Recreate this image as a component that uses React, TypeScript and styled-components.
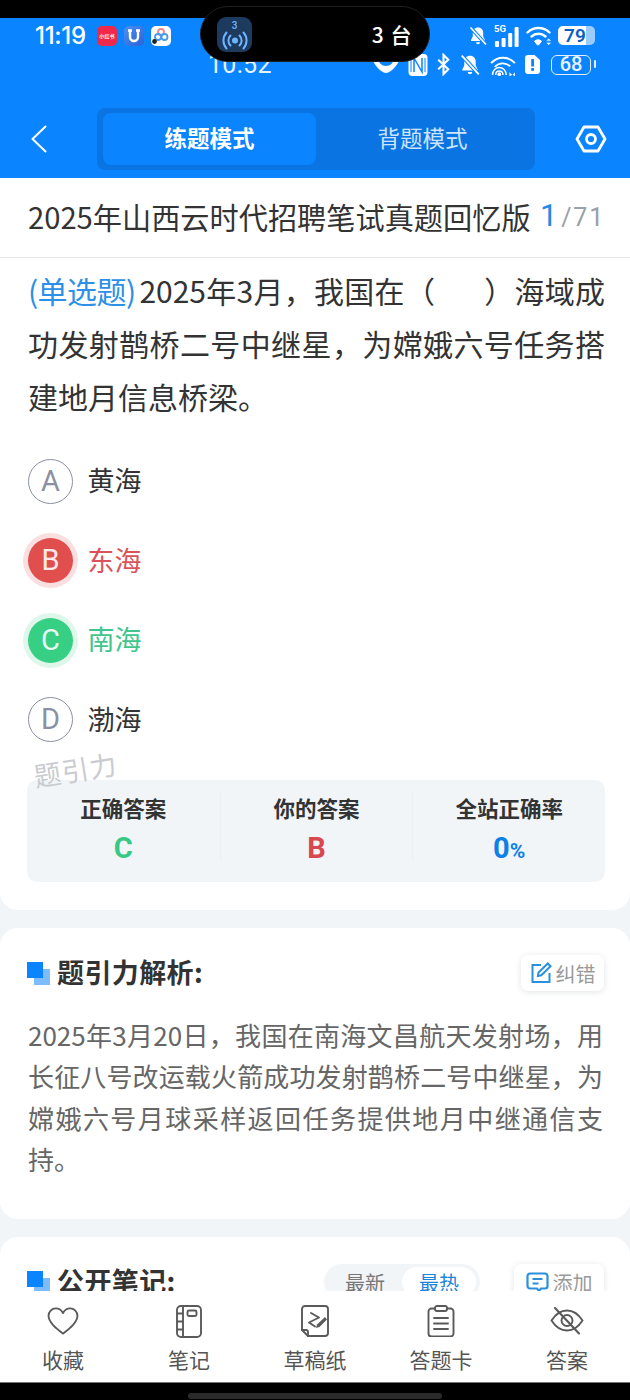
import React from "react";
import styled, { createGlobalStyle } from "styled-components";

const Global = createGlobalStyle`
  html, body { margin: 0; padding: 0; background: #f2f5f8; }
  body { font-family: "Noto Sans CJK SC", "Noto Sans", sans-serif; }
  * { box-sizing: border-box; }
`;

const Page = styled.div`
  width: 630px; height: 1400px; display: flex; flex-direction: column; position: relative; overflow: hidden; background: #f2f5f8;
`;
const TopBlack = styled.div`height: 18px; background: #000; flex: none;`;
const Header = styled.header`height: 160px; flex: none; background: #0a84ff; display: flex; flex-direction: column; color: #fff;`;
const StatusOne = styled.div`height: 31px; flex: none; display: flex; align-items: center; padding: 0 35px; margin-top: 2px;`;
const StatusTwo = styled.div`height: 27px; flex: none; display: flex; align-items: center; padding: 0 34px 0 208px;`;
const Clock = styled.span`font: 500 24px/1 "Inter", "Roboto", sans-serif; letter-spacing: -.3px;`;
const ClockTwo = styled.span`font: 400 25px/1 "Roboto", sans-serif; letter-spacing: .3px; opacity: .9;`;
const AppIcon = styled.div<{ $bg: string }>`width: 20px; height: 20px; border-radius: 5px; background: ${p => p.$bg}; display: flex; align-items: center; justify-content: center; margin-left: 7px; color: #fff; flex: none; &:first-of-type { margin-left: 11px; }`;
const TinyText = styled.span`font-size: 6px; font-weight: 700; white-space: nowrap; transform: scale(.85);`;
const Spacer = styled.div`flex: 1;`;
const StatusIcons = styled.div<{ $gap: number }>`display: flex; align-items: center; gap: ${p => p.$gap}px;`;
const BatteryFull = styled.div`width: 37px; height: 19px; border-radius: 5px; display: flex; background: linear-gradient(90deg, #fff 0 76%, #9ccbff 76% 100%); color: #0b5fc0; font: 600 19px/19px "Roboto", sans-serif; padding-left: 6px; position: relative; letter-spacing: .2px;`;
const BatteryOutline = styled.div`width: 40px; height: 20px; border: 1.5px solid #e3f0ff; border-radius: 6px; color: #e9f3ff; font: 500 20px/17px "Roboto", sans-serif; text-align: center; margin: 0 5px 0 3px; position: relative; &::after { content: ""; position: absolute; right: -6px; top: 4px; width: 2px; height: 8px; background: #e3f0ff; border-radius: 1px; }`;
const Island = styled.div`position: absolute; left: 200px; top: 6px; width: 230px; height: 56px; border-radius: 28px; background: #000; border: 1px solid #1f1f1f; display: flex; align-items: center; padding: 0 17px 0 16px; color: #fff;`;
const IslandIcon = styled.div`width: 35px; height: 35px; border-radius: 9px; background: #1d3a5f; display: flex; flex-direction: column; align-items: center; color: #6fb4ff;`;
const IslandNum = styled.span`font: 500 10px/10px "Roboto", sans-serif; margin-top: 4px;`;
const IslandText = styled.span`font: 500 21px/1 "Noto Sans CJK SC", sans-serif; margin-left: auto; word-spacing: 1px; letter-spacing: .5px;`;
const NavRow = styled.div`display: flex; flex: none; align-items: center; margin-top: 30px; padding: 0 23px 0 31px;`;
const Tabs = styled.div`width: 438px; height: 62px; margin-left: 50px; border-radius: 8px; background: #0a74e2; display: flex; padding: 5px 6px; `;
const Tab = styled.div<{ $active?: boolean }>`width: 213px; border-radius: 8px; display: flex; align-items: center; justify-content: center; padding-bottom: 4px; font-size: 22.5px; font-weight: ${p => (p.$active ? 700 : 400)}; color: ${p => (p.$active ? "#fff" : "#cde4ff")}; background: ${p => (p.$active ? "#0a84ff" : "transparent")}; margin-right: 1px; &:last-child { flex: 1; }`;
const RightBtn = styled.div`margin-left: auto; display: flex;`;
const Scroll = styled.main`flex: 1; min-height: 0; overflow: hidden; display: flex; flex-direction: column; gap: 18px;`;
const QuestionCard = styled.section`background: #fff; border-radius: 0 0 18px 18px; flex: none; height: 732px;`;
const TitleRow = styled.div`height: 80px; display: flex; align-items: center; padding: 0 25px 4px 28px; border-bottom: 1px solid #e6e8ec; margin-bottom: 6px;`;
const TitleText = styled.h1`margin: 0; font-size: 29.2px; font-weight: 400; color: #333; white-space: nowrap;`;
const Counter = styled.div`margin-left: auto; display: flex; align-items: baseline; color: #9aa0a8; font: 400 25px/1 "Roboto", sans-serif; letter-spacing: 1.8px;`;
const CounterNow = styled.span`font-size: 31px; color: #1f8ae8; margin-right: 2px;`;
const Question = styled.p`margin: 0; padding: 0 25px 0 28px; font-size: 30px; line-height: 53px; color: #333; text-align: justify;`;
const QType = styled.span`color: #2c90e6; letter-spacing: -.8px; margin-right: 4px;`;
const Options = styled.div`display: flex; flex-direction: column; margin-top: 35.5px; padding: 0 28px; gap: 34.5px;`;
const Option = styled.div`display: flex; align-items: center; gap: 14.5px; height: 45px;`;
const Circle = styled.div<{ $state?: "wrong" | "right" }>`
  width: 45px; height: 45px; border-radius: 50%; display: flex; align-items: center; justify-content: center; font: 400 29px/1 "Roboto", sans-serif;
  ${p => p.$state === "wrong" ? "background:#e04e4e;color:#fde9e9;box-shadow:0 0 0 5px #fadfe0;" : p.$state === "right" ? "background:#36cf83;color:#e9fbf2;box-shadow:0 0 0 5px #def7ea;" : "border:1.5px solid #8b90a3;color:#8b90a3;"}
`;
const OptionLabel = styled.span<{ $state?: "wrong" | "right" }>`font-size: 27px; padding-bottom: 3px; color: ${p => (p.$state === "wrong" ? "#d9545a" : p.$state === "right" ? "#41c58c" : "#333")};`;
const StatsWrap = styled.div`position: relative; padding: 0 25px 0 27px; margin-top: 38px;`;
const Watermark = styled.div`position: absolute; left: 37px; top: -24px; font-size: 27px; color: #c9cbcf; transform: rotate(-9deg); letter-spacing: 1px; transform-origin: left bottom;`;
const Stats = styled.div`height: 102px; background: #f2f5f8; border-radius: 10px; display: grid; grid-template-columns: repeat(3, 1fr); padding: 13px 0 0;`;
const Stat = styled.div`display: flex; flex-direction: column; align-items: center; height: 68px; border-left: 1px solid #edf0f3; &:first-child { border-left: none; }`;
const StatLabel = styled.div`font-size: 21.5px; line-height: 30px; font-weight: 700; color: #333;`;
const StatValue = styled.div<{ $color: string }>`font: 700 29px/36px "Roboto", sans-serif; color: ${p => p.$color}; margin-top: 7px;`;
const StatUnit = styled.span`font-size: 21px;`;
const Card = styled.section<{ $h: number }>`background: #fff; border-radius: 18px; height: ${p => p.$h}px; flex: none; padding: 27px 26px 0 27px;`;
const SectionHead = styled.div`display: flex; align-items: center; height: 36px;`;
const Mark = styled.div`width: 23px; height: 23px; position: relative; margin-right: 7px; flex: none;
  &::before { content: ""; position: absolute; right: 0; bottom: 0; width: 16px; height: 16px; background: #7dbdff; }
  &::after { content: ""; position: absolute; left: 0; top: 0; width: 16px; height: 16px; background: #0a84ff; }`;
const SectionTitle = styled.h2`margin: 0 0 2px; font-size: 27px; line-height: 36px; font-weight: 700; letter-spacing: .4px; color: #333; white-space: nowrap;`;
const Chip = styled.div<{ $w: number; $ml?: number }>`margin-left: ${p => (p.$ml ? `${p.$ml}px` : "auto")}; width: ${p => p.$w}px; height: 36px; border-radius: 7px; background: #fff; box-shadow: 0 1px 6px rgba(40,60,90,.14); display: flex; align-items: center; justify-content: center; gap: 4px; font-size: 20px; color: #9a9a9a;`;
const Analysis = styled.p`margin: 23px 1px 0 1px; font-size: 26px; line-height: 41.3px; color: #666; text-align: justify;`;
const Seg = styled.div`margin-left: auto; width: 156px; height: 36px; border-radius: 18px; background: #f2f5f8; display: flex; padding: 3px 4px; align-items: stretch; font-size: 20px;`;
const SegItem = styled.div<{ $active?: boolean }>`flex: 1; border-radius: 16px; display: flex; align-items: center; justify-content: center; color: ${p => (p.$active ? "#1f85d9" : "#777")}; background: ${p => (p.$active ? "#fff" : "transparent")};`;
const BottomNav = styled.nav`height: 91px; flex: none; background: #fff; display: grid; grid-template-columns: repeat(5, 1fr); `;
const NavItem = styled.div`display: flex; flex-direction: column; align-items: center; color: #555; font-size: 21px;`;
const NavIcon = styled.div`height: 36px; margin-top: 12px; display: flex; align-items: center; justify-content: center;`;
const NavLabel = styled.span`line-height: 30px; margin-top: 5px;`;
const BottomBlack = styled.div`height: 18px; flex: none; background: #000; display: flex; justify-content: center; align-items: flex-end; padding-bottom: 1px; border-top: 1px solid #777;`;
const HomeBar = styled.div`width: 254px; height: 6px; border-radius: 3px; background: #2b2b2b;`;

const Bell = ({ size = 20 }: { size?: number }) => (
  <svg width={size} height={size} viewBox="0 0 20 20" fill="#fff">
    <path d="M10 1.5c-3.2 0-5.2 2.4-5.2 5.4v3.6L3 14v1h14v-1l-1.8-3.5V6.9c0-3-2-5.4-5.2-5.4z" />
    <path d="M8 16.3h4a2 2 0 0 1-4 0z" />
    <path d="M2.5 1.5l15.5 17" stroke="#0a84ff" strokeWidth="3.6" />
    <path d="M2.5 1.5l15.5 17" stroke="#fff" strokeWidth="1.7" />
  </svg>
);
const Signal = () => (
  <svg width="26" height="24" viewBox="0 0 26 24" fill="#fff">
    <text x="0" y="8" fontSize="9.5" fontWeight="700" fontFamily="Roboto, sans-serif">5G</text>
    <rect x="1" y="17" width="4" height="6" rx="1" />
    <rect x="7.6" y="14" width="4" height="9" rx="1" />
    <rect x="14.2" y="9" width="4" height="14" rx="1" />
    <rect x="20.6" y="3" width="4" height="20" rx="1" />
  </svg>
);
const Wifi = () => (
  <svg width="26" height="22" viewBox="0 0 26 22" fill="none" stroke="#fff" strokeWidth="2.4" strokeLinecap="round">
    <path d="M1.5 7.5C7.5 1.5 17.5 1.5 23.5 7.5" />
    <path d="M5.5 11.5c4-3.7 10-3.7 14 0" />
    <path d="M11 19.5l-2.5-3.4c2.4-1.7 4.7-1.7 7 0L13 19.5z" fill="#fff" strokeWidth="1" />
    <path d="M21 15.5l1.7-1.8 1.7 1.8zM21 18l1.7 1.8 1.7-1.8z" fill="#fff" strokeWidth=".4" />
  </svg>
);
const Nfc = () => (
  <svg width="20" height="24" viewBox="0 0 20 24" fill="none">
    <rect x="0.5" y="1" width="19" height="22" rx="4" fill="#fff" />
    <path d="M6 19V5l8 14V5" stroke="#0a84ff" strokeWidth="1.5" />
    <path d="M3 5v14M17 5v14" stroke="#0a84ff" strokeWidth="1" />
  </svg>
);
const Bt = () => (
  <svg width="15" height="23" viewBox="0 0 15 24" fill="none" stroke="#fff" strokeWidth="2.2">
    <path d="M2 7l10.5 10-5 5V2l5 5L2 17" />
  </svg>
);
const WifiRadar = () => (
  <svg width="28" height="22" viewBox="0 0 28 24" fill="none" stroke="#fff" strokeWidth="1.8">
    <path d="M1 10C8 2 20 2 27 10" strokeWidth="2.2" />
    <path d="M5 14c5-5 12-5 17-.5" />
    <path d="M2.5 23c0-11 15-11 15 0M6 23c0-6 8-6 8 0" strokeWidth="1.6" />
    <circle cx="10" cy="22" r="2" fill="#fff" stroke="none" />
    <path d="M21 20l3 2.5-3 2zM27 20l-2.5 2.5 2.5 2z" fill="#fff" stroke="none" />
  </svg>
);
const Sim = () => (
  <svg width="15" height="19" viewBox="0 0 15 19">
    <path d="M3 0h6.5L15 5v11a3 3 0 0 1-3 3H3a3 3 0 0 1-3-3V3a3 3 0 0 1 3-3z" fill="#fff" />
    <rect x="6.2" y="4" width="2.8" height="7.5" fill="#0a84ff" />
    <rect x="6.2" y="13" width="2.8" height="2.8" fill="#0a84ff" />
  </svg>
);
const EyeBlob = () => (
  <svg width="28" height="24" viewBox="0 0 28 24">
    <path d="M1 8c4 8 10 12 13 12s9-4 13-12z" fill="#fff" />
    <circle cx="14" cy="5" r="8" fill="#0a84ff" />
  </svg>
);
const Broadcast = () => (
  <svg width="26" height="19" viewBox="0 0 26 19" fill="none" stroke="currentColor" strokeWidth="2" strokeLinecap="round">
    <circle cx="13" cy="9.5" r="3" fill="currentColor" stroke="none" />
    <path d="M8.5 4.5a7 7 0 0 0 0 10M17.5 4.5a7 7 0 0 1 0 10M4.5 1.5a12 12 0 0 0 0 16M21.5 1.5a12 12 0 0 1 0 16" />
  </svg>
);
const Pencil = () => (
  <svg width="22" height="22" viewBox="0 0 22 22" fill="none" stroke="#2a90dc" strokeWidth="2">
    <path d="M11 3H2.5v17h17v-9" />
    <path d="M8.5 10.5L17.8 1.5l2.7 2.7L11.3 13.3l-3.4.6z" />
  </svg>
);
const Comment = () => (
  <svg width="23" height="21" viewBox="0 0 23 21" fill="none" stroke="#2a90dc" strokeWidth="2.2">
    <path d="M4 1.5h15a2.5 2.5 0 0 1 2.5 2.5v10a2.5 2.5 0 0 1-2.5 2.5h-4L13 19l-2-2.5H4A2.5 2.5 0 0 1 1.5 14V4A2.5 2.5 0 0 1 4 1.5z" />
    <path d="M6.5 7h10M6.5 11.5h6" />
  </svg>
);

const Heart = () => (
  <svg width="32" height="28" viewBox="0 0 34 30" fill="none" stroke="#5a5a5a" strokeWidth="2" strokeLinejoin="round">
    <path d="M17 28.5C10 23 1.5 16.5 1.5 9.5 1.5 5 5 1.5 9.3 1.5c3.2 0 6 1.8 7.7 5 1.7-3.2 4.5-5 7.7-5 4.3 0 7.8 3.5 7.8 8 0 7-8.5 13.5-15.5 19z" />
  </svg>
);
const Notebook = () => (
  <svg width="26" height="33" viewBox="0 0 26 33" fill="none" stroke="#5a5a5a" strokeWidth="1.9">
    <rect x="1" y="1" width="24" height="31" rx="4" />
    <path d="M7 1v31M1 8.5h6M1 16.5h6M1 24.5h6" />
    <rect x="11.5" y="5.5" width="9" height="5.5" rx="1.5" />
  </svg>
);
const Draft = () => (
  <svg width="28" height="32" viewBox="0 0 28 32" fill="none" stroke="#5a5a5a" strokeWidth="1.9" strokeLinejoin="round" strokeLinecap="round">
    <path d="M4 1h20a3 3 0 0 1 3 3v24a3 3 0 0 1-3 3H7l-6-6V4a3 3 0 0 1 3-3z" />
    <path d="M1 25h4a2 2 0 0 1 2 2v4" />
    <path d="M10 8l8 4.500-10 5 6 4" />
    <path d="M15 23l1-3.500 8-7.500 2 2.500-7.500 7.500z" fill="#5a5a5a" stroke="none" />
  </svg>
);
const Clipboard = () => (
  <svg width="28" height="32" viewBox="0 0 28 32" fill="none" stroke="#5a5a5a" strokeWidth="1.9" strokeLinecap="round">
    <path d="M8 3.5H4.500a3 3 0 0 0-3 3v22a3 3 0 0 0 3 3h19a3 3 0 0 0 3-3v-22a3 3 0 0 0-3-3H20" />
    <rect x="8" y="1" width="12" height="5" rx="2" />
    <path d="M7 13h14M7 18.5h14M7 24h14" />
  </svg>
);
const EyeOff = () => (
  <svg width="34" height="28" viewBox="0 0 34 28" fill="none" stroke="#5a5a5a" strokeWidth="1.9" strokeLinecap="round">
    <path d="M1.5 13.5C6 6.5 11 3.500 17 3.500s11 3 15.500 10C28 20.500 23 23.500 17 23.500S6 20.500 1.500 13.500z" />
    <circle cx="17" cy="13.5" r="5.5" />
    <path d="M5 1l24 25.5" strokeWidth="2.1" />
  </svg>
);
const Back = () => (
  <svg width="16" height="28" viewBox="0 0 16 28" fill="none" stroke="#fff" strokeWidth="2" strokeLinecap="round" strokeLinejoin="round">
    <path d="M14.5 1.5L1.5 14l13 12.5" />
  </svg>
);
const Hex = () => (
  <svg width="32" height="28" viewBox="0 0 32 28" fill="none" stroke="#fff" strokeWidth="2.8" strokeLinejoin="round">
    <path d="M9 2h14l7 12-7 12H9L2 14z" />
    <circle cx="16" cy="14" r="4.5" />
  </svg>
);

const options = [
  { k: "A", t: "黄海" },
  { k: "B", t: "东海", s: "wrong" as const },
  { k: "C", t: "南海", s: "right" as const },
  { k: "D", t: "渤海" },
];
const nav = [
  { l: "收藏", i: <Heart /> },
  { l: "笔记", i: <Notebook /> },
  { l: "草稿纸", i: <Draft /> },
  { l: "答题卡", i: <Clipboard /> },
  { l: "答案", i: <EyeOff /> },
];

export default function App() {
  return (
    <Page>
      <Global />
      <TopBlack />
      <Header>
        <StatusOne>
          <Clock>11:19</Clock>
          <AppIcon $bg="#f0284a"><TinyText>小红书</TinyText></AppIcon>
          <AppIcon $bg="linear-gradient(135deg,#4f8ff0,#2a62d8)">
            <svg width="14" height="15" viewBox="0 0 14 15" fill="none" stroke="#fff" strokeWidth="2.4"><path d="M3 2v7a4 4 0 0 0 8 0V2M1 2.5h4M9 2.5h4" /></svg>
          </AppIcon>
          <AppIcon $bg="#fff">
            <svg width="19" height="19" viewBox="0 0 19 19" fill="none" strokeWidth="1.8"><circle cx="10" cy="6" r="3" stroke="#e88" /><circle cx="13.5" cy="11" r="3" stroke="#4a9be8" /><circle cx="7" cy="11" r="3" stroke="#4a9be8" /><circle cx="3.5" cy="15.5" r="1.5" fill="#222" stroke="#222" /></svg>
          </AppIcon>
          <Spacer />
          <StatusIcons $gap={6}>
            <Bell />
            <Signal />
            <Wifi />
            <BatteryFull>79</BatteryFull>
          </StatusIcons>
        </StatusOne>
        <StatusTwo>
          <ClockTwo>10:52</ClockTwo>
          <Spacer />
          <StatusIcons $gap={8}>
            <EyeBlob />
            <Nfc />
            <Bt />
            <Bell size={22} />
            <WifiRadar />
            <Sim />
            <BatteryOutline>68</BatteryOutline>
          </StatusIcons>
        </StatusTwo>
        <NavRow>
          <Back />
          <Tabs>
            <Tab $active>练题模式</Tab>
            <Tab>背题模式</Tab>
          </Tabs>
          <RightBtn><Hex /></RightBtn>
        </NavRow>
      </Header>
      <Island>
        <IslandIcon>
          <IslandNum>3</IslandNum>
          <Broadcast />
        </IslandIcon>
        <IslandText>3 台</IslandText>
      </Island>
      <Scroll>
        <QuestionCard>
          <TitleRow>
            <TitleText>2025年山西云时代招聘笔试真题回忆版</TitleText>
            <Counter><CounterNow>1</CounterNow>/71</Counter>
          </TitleRow>
          <Question>
            <QType>(单选题)</QType>2025年3月，我国在（&nbsp;&nbsp;&nbsp;&nbsp;&nbsp;&nbsp;&nbsp;）海域成功发射鹊桥二号中继星，为嫦娥六号任务搭建地月信息桥梁。
          </Question>
          <Options>
            {options.map(o => (
              <Option key={o.k}>
                <Circle $state={o.s}>{o.k}</Circle>
                <OptionLabel $state={o.s}>{o.t}</OptionLabel>
              </Option>
            ))}
          </Options>
          <StatsWrap>
            <Watermark>题引力</Watermark>
            <Stats>
              <Stat><StatLabel>正确答案</StatLabel><StatValue $color="#36c985">C</StatValue></Stat>
              <Stat><StatLabel>你的答案</StatLabel><StatValue $color="#d9474f">B</StatValue></Stat>
              <Stat><StatLabel>全站正确率</StatLabel><StatValue $color="#0d7fe8">0<StatUnit>%</StatUnit></StatValue></Stat>
            </Stats>
          </StatsWrap>
        </QuestionCard>
        <Card $h={291}>
          <SectionHead>
            <Mark />
            <SectionTitle>题引力解析:</SectionTitle>
            <Chip $w={83}><Pencil />纠错</Chip>
          </SectionHead>
          <Analysis>2025年3月20日，我国在南海文昌航天发射场，用长征八号改运载火箭成功发射鹊桥二号中继星，为嫦娥六号月球采样返回任务提供地月中继通信支持。</Analysis>
        </Card>
        <Card $h={200}>
          <SectionHead>
            <Mark />
            <SectionTitle>公开笔记:</SectionTitle>
            <Seg>
              <SegItem>最新</SegItem>
              <SegItem $active>最热</SegItem>
            </Seg>
            <Chip $w={90} $ml={34}><Comment />添加</Chip>
          </SectionHead>
        </Card>
      </Scroll>
      <BottomNav>
        {nav.map(n => (
          <NavItem key={n.l}>
            <NavIcon>{n.i}</NavIcon>
            <NavLabel>{n.l}</NavLabel>
          </NavItem>
        ))}
      </BottomNav>
      <BottomBlack><HomeBar /></BottomBlack>
    </Page>
  );
}
